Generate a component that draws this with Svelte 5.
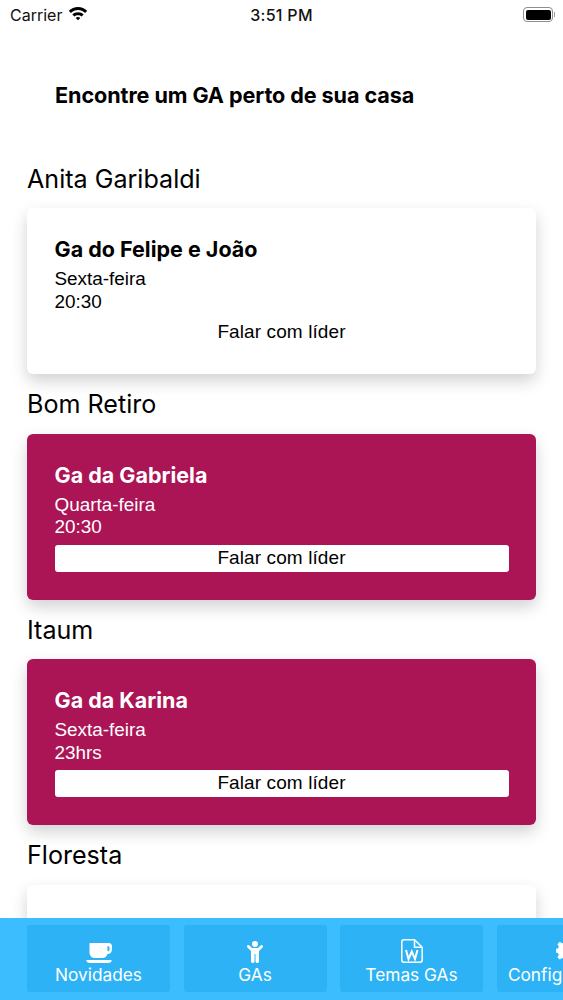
<script>
  const groups = [
    { place: 'Anita Garibaldi', name: 'Ga do Felipe e João', day: 'Sexta-feira', time: '20:30', hot: false },
    { place: 'Bom Retiro', name: 'Ga da Gabriela', day: 'Quarta-feira', time: '20:30', hot: true },
    { place: 'Itaum', name: 'Ga da Karina', day: 'Sexta-feira', time: '23hrs', hot: true },
    { place: 'Floresta', name: 'Ga do Jonas', day: 'Terça-feira', time: '20:00', hot: false }
  ];
</script>

<div class="screen">
  <header class="status">
    <div class="status-left">
      <span>Carrier</span>
      <svg class="wifi" viewBox="0 0 20 15" width="20" height="15" aria-hidden="true">
        <path d="M10 1C6.4 1 3.2 2.4.8 4.7l2.100 2.200C4.800 5.100 7.300 4 10 4s5.200 1.100 7.100 2.900l2.100-2.200C16.800 2.400 13.600 1 10 1z"/>
        <path d="M10 6.200c-2.200 0-4.200.9-5.700 2.200l2.100 2.200c.9-.9 2.200-1.400 3.600-1.400s2.700.5 3.600 1.400l2.100-2.200C14.200 7.100 12.200 6.200 10 6.200z"/>
        <path d="M10 11c-.9 0-1.700.3-2.300.9L10 14.300l2.300-2.400c-.6-.6-1.400-.9-2.300-.9z"/>
      </svg>
    </div>
    <span class="clock">3:51 PM</span>
    <div class="battery"><i></i></div>
  </header>

  <h1>Encontre um GA perto de sua casa</h1>

  <main class="list">
    {#each groups as g}
      <section>
        <h2>{g.place}</h2>
        <article class="card" class:hot={g.hot}>
          <h3>{g.name}</h3>
          <p>{g.day}</p>
          <p>{g.time}</p>
          <button class="talk">Falar com líder</button>
        </article>
      </section>
    {/each}
  </main>

  <nav class="tabs">
    <div class="tab">
      <svg viewBox="0 0 26 20" width="26" height="20" aria-hidden="true">
        <path d="M4 0h19c1.700 0 3 1.400 3 3.300v3.400C26 8.800 24.200 11 22 11h-.6c-.5 2.400-2.500 4-4.900 4H8.900C6 15 3.500 12.700 3.500 9.700V.6C3.500.2 3.700 0 4 0zm17.500 3v5.300H22c.8 0 1.500-.8 1.500-1.800V4.800c0-1-.7-1.800-1.500-1.800z" fill-rule="evenodd"/>
        <path d="M1 17h24c.5 0 1 .3.6 1-.6 1-1.600 2-3.600 2H4c-2 0-3-1-3.600-2C0 17.300.5 17 1 17z"/>
      </svg>
      <span>Novidades</span>
    </div>
    <div class="tab">
      <svg viewBox="0 0 16 22" width="16" height="22" aria-hidden="true">
        <circle cx="8" cy="3" r="3"/>
        <path d="M.3 4.600c.5-.6 1.400-.7 2-.2L5 7h6l2.700-2.600c.6-.5 1.500-.4 2 .2s.4 1.500-.2 2L12 10v3H4v-3L.5 6.600c-.6-.5-.7-1.400-.2-2z"/>
        <path d="M4 13h3.500v7.500c0 .8-.7 1.500-1.700 1.500S4 21.300 4 20.500zM8.500 13H12v7.500c0 .8-.7 1.500-1.800 1.500s-1.700-.7-1.700-1.500z"/>
      </svg>
      <span>GAs</span>
    </div>
    <div class="tab">
      <svg viewBox="0 0 22 24" width="22" height="24" aria-hidden="true">
        <path class="outline" d="M3 .8h10.500l7.700 7.500v12.700c0 1.200-1 2.200-2.200 2.200H3c-1.200 0-2.200-1-2.200-2.200V3C.8 1.800 1.800.8 3 .8z"/>
        <path class="outline" d="M13.500 1v7.300h7.500"/>
        <path class="w" d="M5 11l2.500 9 3.300-7.500 3.200 7.500 2.500-9"/>
      </svg>
      <span>Temas GAs</span>
    </div>
    <div class="tab">
      <svg viewBox="0 0 24 24" width="24" height="24" aria-hidden="true">
        <path d="M10 1h4l.6 3 2.400 1 2.600-1.700 2.800 2.800L20.700 8.700l1 2.300 3 .6v4l-3 .6-1 2.300 1.700 2.600-2.800 2.800-2.600-1.700-2.400 1-.6 3h-4l-.6-3-2.400-1-2.600 1.700-2.800-2.800 1.700-2.600-1-2.300-3-.6v-4l3-.6 1-2.300L1.600 6.100l2.800-2.800L7 5l2.400-1z" transform="scale(.86)"/>
      </svg>
      <span>Configurações</span>
    </div>
  </nav>
</div>

<style>
  :global(body) { margin: 0; background: #fff; }

  .screen {
    position: relative;
    width: 563px;
    height: 1000px;
    overflow: hidden;
    background: #fff;
    color: #000;
    font-family: "Liberation Sans", Arial, sans-serif;
  }

  .status {
    height: 29px;
    padding: 0 10px 0 10px;
    display: grid;
    grid-template-columns: 1fr auto 1fr;
    align-items: center;
    font-family: Inter, sans-serif;
    font-size: 16px;
    color: #111;
  }
  .status-left { display: flex; align-items: center; gap: 6px; }
  .wifi { fill: #000; margin-top: -2px; }
  .clock { font-weight: 500; letter-spacing: 0.300px; }
  .battery {
    justify-self: end;
    position: relative;
    box-sizing: border-box;
    width: 30px;
    height: 15px;
    padding: 1.500px;
    border: 1px solid #8e8e8e;
    border-radius: 4px;
  }
  .battery::after {
    content: '';
    position: absolute;
    right: -3px;
    top: 3.500px;
    width: 1.500px;
    height: 5px;
    background: #9a9a9a;
  }
  .battery i { display: block; height: 100%; background: #000; border-radius: 2px; }

  h1 {
    margin: 0;
    padding: 53px 0 0 55px;
    height: 26px;
    line-height: 26px;
    font-family: Inter, sans-serif;
    font-size: 21.600px;
    font-weight: 700;
    letter-spacing: -0.080px;
  }

  .list { padding: 43.500px 27px 0; }
  section { height: 225.500px; }

  h2 {
    margin: 0;
    height: 56.500px;
    line-height: 55.500px;
    font-family: Inter, sans-serif;
    font-size: 25.100px;
    font-weight: 400;
  }

  .card {
    box-sizing: border-box;
    height: 166px;
    padding: 27px 27.500px 0;
    border-radius: 6px;
    background: #fff;
    box-shadow: 0 7px 16px rgba(0, 0, 0, 0.18);
  }
  .card.hot { background: #ab1455; color: #fff; }
  h3 {
    margin: 0 0 6px;
    height: 27px;
    line-height: 28px;
    font-family: Inter, sans-serif;
    font-size: 21.500px;
    font-weight: 700;
  }
  p { margin: 0; font-size: 18.900px; line-height: 22.500px; }

  .talk {
    display: block;
    width: 100%;
    height: 27px;
    margin-top: 6px;
    padding: 0 0 2px;
    border: 0;
    border-radius: 3px;
    background: #fff;
    color: #000;
    font: 400 19px/25px "Liberation Sans", Arial, sans-serif;
    letter-spacing: 0.100px;
  }

  .tabs {
    position: absolute;
    left: 0;
    right: 0;
    bottom: 0;
    height: 82px;
    box-sizing: border-box;
    padding: 7px 0 8px 27px;
    display: flex;
    gap: 13.500px;
    background: #3bbdfe;
  }
  .tab {
    flex: 0 0 143px;
    border-radius: 3px;
    background: #2db3f5;
    color: #fff;
    display: flex;
    flex-direction: column;
    align-items: center;
    justify-content: flex-end;
    gap: 2px;
    padding-bottom: 7px;
    box-sizing: border-box;
    font-family: Inter, sans-serif;
    font-size: 17.300px;
    line-height: 20px;
    white-space: nowrap;
  }
  .tab svg { fill: #fff; }
  .outline { fill: none; stroke: #fff; stroke-width: 1.500; }
  .w { fill: none; stroke: #fff; stroke-width: 2; }
</style>
